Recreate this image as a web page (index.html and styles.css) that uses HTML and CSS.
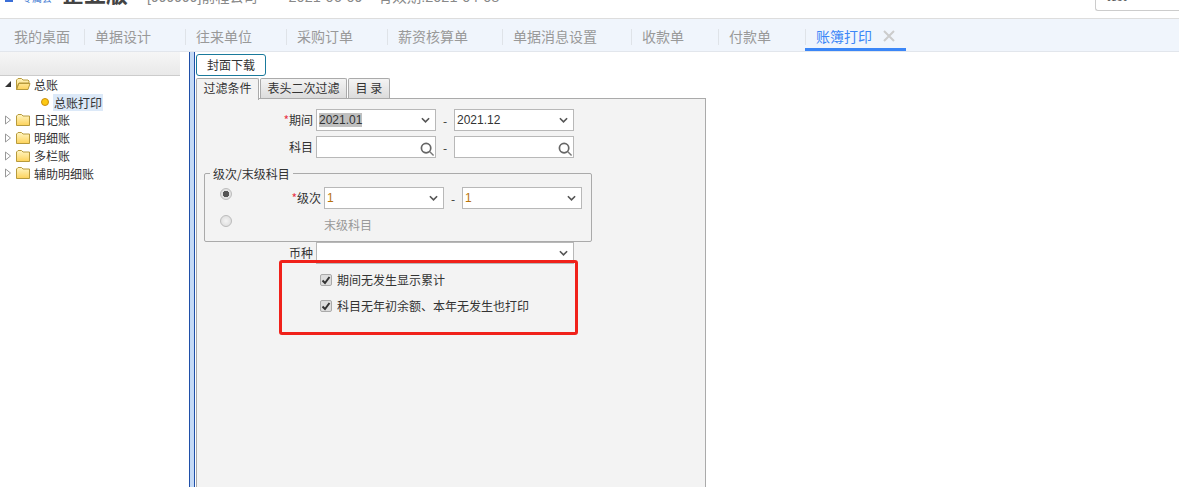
FILE: index.html
```html
<!DOCTYPE html>
<html>
<head>
    <meta charset="utf-8">
    <title>账簿打印</title>
    <link rel="stylesheet" href="styles.css">
</head>

<body>
    <div class="header">
        <div class="header-row">
            <span class="brand-mark"></span>
            <span class="brand-small">专属会</span>
            <span class="brand-big">企业版</span>
            <span class="company">[999999]前程公司</span>
            <span class="date">2021-06-09</span>
            <span class="expiry">有效期:2021-04-08</span>
        </div>
        <div class="user-box"><span class="user-name">test</span></div>
    </div>

    <div class="tabbar">
        <div class="tab first">我的桌面</div>
        <div class="tab">单据设计</div>
        <div class="tab">往来单位</div>
        <div class="tab">采购订单</div>
        <div class="tab">薪资核算单</div>
        <div class="tab">单据消息设置</div>
        <div class="tab">收款单</div>
        <div class="tab">付款单</div>
        <div class="tab active">账簿打印<svg class="close" viewBox="0 0 12 12"><path d="M1 1L11 11M11 1L1 11" stroke="#ccc" stroke-width="2"/></svg></div>
    </div>

    <div class="main">
        <div class="side">
            <div class="side-head"></div>
            <div class="tree">
                <div class="node">
                    <svg class="arrow" viewBox="0 0 8 8"><path d="M7 1V7H1Z" fill="#333"/></svg>
                    <svg class="folder" viewBox="0 0 16 14"><defs><linearGradient id="folder-fill" x1="0" y1="0" x2="0" y2="1"><stop offset="0" stop-color="#fff6c4"/><stop offset="1" stop-color="#fdd25a"/></linearGradient></defs><path d="M1.500 12.500V3L3 1.500H6.500L8 3H13L14 4V6H4L1.500 12.500L3.500 6.500H15L13 12.500Z" fill="url(#folder-fill)" stroke="#b79a3c"/></svg>
                    <span>总账</span>
                </div>
                <div class="node leaf">
                    <span class="dot"></span>
                    <span class="selected">总账打印</span>
                </div>
                <div class="node">
                    <svg class="arrow" viewBox="0 0 8 10"><path d="M1.500 1L6.500 5L1.500 9Z" fill="#fff" stroke="#999"/></svg>
                    <svg class="folder" viewBox="0 0 16 14"><path d="M1.500 12.500V3L3 1.500H6.500L8 3H14.500V12.500Z" fill="url(#folder-fill)" stroke="#b79a3c"/></svg>
                    <span>日记账</span>
                </div>
                <div class="node">
                    <svg class="arrow" viewBox="0 0 8 10"><path d="M1.500 1L6.500 5L1.500 9Z" fill="#fff" stroke="#999"/></svg>
                    <svg class="folder" viewBox="0 0 16 14"><path d="M1.500 12.500V3L3 1.500H6.500L8 3H14.500V12.500Z" fill="url(#folder-fill)" stroke="#b79a3c"/></svg>
                    <span>明细账</span>
                </div>
                <div class="node">
                    <svg class="arrow" viewBox="0 0 8 10"><path d="M1.500 1L6.500 5L1.500 9Z" fill="#fff" stroke="#999"/></svg>
                    <svg class="folder" viewBox="0 0 16 14"><path d="M1.500 12.500V3L3 1.500H6.500L8 3H14.500V12.500Z" fill="url(#folder-fill)" stroke="#b79a3c"/></svg>
                    <span>多栏账</span>
                </div>
                <div class="node">
                    <svg class="arrow" viewBox="0 0 8 10"><path d="M1.500 1L6.500 5L1.500 9Z" fill="#fff" stroke="#999"/></svg>
                    <svg class="folder" viewBox="0 0 16 14"><path d="M1.500 12.500V3L3 1.500H6.500L8 3H14.500V12.500Z" fill="url(#folder-fill)" stroke="#b79a3c"/></svg>
                    <span>辅助明细账</span>
                </div>
            </div>
        </div>

        <div class="splitter"></div>

        <div class="content">
            <div class="button">封面下载</div>
            <div class="form-tabs">
                <div class="form-tab current">过滤条件</div>
                <div class="form-tab">表头二次过滤</div>
                <div class="form-tab">目 录</div>
            </div>

            <div class="panel">
                <div class="row">
                    <div class="label"><em>*</em>期间</div>
                    <div class="field"><span class="highlight">2021.01</span><svg class="chevron" viewBox="0 0 10 6"><path d="M1 1L5 5L9 1" fill="none" stroke="#555" stroke-width="1.800"/></svg></div>
                    <div class="dash">-</div>
                    <div class="field"><span>2021.12</span><svg class="chevron" viewBox="0 0 10 6"><path d="M1 1L5 5L9 1" fill="none" stroke="#555" stroke-width="1.800"/></svg></div>
                </div>
                <div class="row">
                    <div class="label">科目</div>
                    <div class="field"><svg class="search" viewBox="0 0 16 16"><circle cx="6.500" cy="6.500" r="5" fill="none" stroke="#666" stroke-width="1.800"/><path d="M10.500 10.500L14.500 14.500" stroke="#777" stroke-width="1.500"/></svg></div>
                    <div class="dash">-</div>
                    <div class="field"><svg class="search" viewBox="0 0 16 16"><circle cx="6.500" cy="6.500" r="5" fill="none" stroke="#666" stroke-width="1.800"/><path d="M10.500 10.500L14.500 14.500" stroke="#777" stroke-width="1.500"/></svg></div>
                </div>

                <div class="group">
                    <div class="group-title">级次/末级科目</div>
                    <div class="group-body">
                        <div class="radios">
                            <span class="radio on"></span>
                            <span class="radio"></span>
                        </div>
                        <div class="group-rows">
                            <div class="row">
                                <div class="label short"><em>*</em>级次</div>
                                <div class="field"><span class="level">1</span><svg class="chevron" viewBox="0 0 10 6"><path d="M1 1L5 5L9 1" fill="none" stroke="#555" stroke-width="1.800"/></svg></div>
                                <div class="dash">-</div>
                                <div class="field"><span class="level">1</span><svg class="chevron" viewBox="0 0 10 6"><path d="M1 1L5 5L9 1" fill="none" stroke="#555" stroke-width="1.800"/></svg></div>
                            </div>
                            <div class="last-level">末级科目</div>
                        </div>
                    </div>
                </div>

                <div class="row">
                    <div class="label">币种</div>
                    <div class="field wide"><svg class="chevron" viewBox="0 0 10 6"><path d="M1 1L5 5L9 1" fill="none" stroke="#555" stroke-width="1.800"/></svg></div>
                </div>

                <div class="red-box">
                    <div class="check-row">
                        <span class="check"><svg viewBox="0 0 10 10"><path d="M1.500 5.500L4 8L8.500 2" fill="none" stroke="#333" stroke-width="2"/></svg></span>
                        <span class="check-text">期间无发生显示累计</span>
                    </div>
                    <div class="check-row">
                        <span class="check"><svg viewBox="0 0 10 10"><path d="M1.500 5.500L4 8L8.500 2" fill="none" stroke="#333" stroke-width="2"/></svg></span>
                        <span class="check-text">科目无年初余额、本年无发生也打印</span>
                    </div>
                </div>
            </div>
        </div>
    </div>
</body>
</html>
```

FILE: styles.css
```css
html, body {
    height: 487px;
    overflow: hidden;
}

body {
    margin: 0;
    padding: 0;
    display: flex;
    flex-direction: column;
    font-family: "Noto Sans CJK SC", "Liberation Sans", sans-serif;
    font-size: 12px;
    color: #333;
    background-color: #fff;
}

.header {
    display: flex;
    justify-content: space-between;
    height: 18px;
    flex-shrink: 0;
    overflow: hidden;
    border-bottom: 1px solid #ddd;
}

.header-row {
    display: flex;
    align-items: baseline;
    height: 20px;
    line-height: 20px;
    margin-top: -18px;
    padding-left: 5px;
    color: #888;
    font-size: 14px;
}

.brand-mark {
    width: 8px;
    height: 12px;
    background-color: #3b6fd8;
}

.brand-small {
    margin-left: 9px;
    font-size: 10px;
    color: #4a7fd4;
}

.brand-big {
    margin-left: 10px;
    font-size: 22px;
    font-weight: bold;
    color: #444;
}

.company {
    margin-left: 19px;
    font-family: "Liberation Sans", "Noto Sans CJK SC", sans-serif;
}

.date {
    margin-left: 31px;
    font-size: 14.500px;
    font-family: "Liberation Sans", sans-serif;
}

.expiry {
    margin-left: 15px;
    font-size: 14.500px;
    font-family: "Liberation Sans", "Noto Sans CJK SC", sans-serif;
}

.user-box {
    box-sizing: border-box;
    width: 84px;
    height: 11px;
    padding-left: 10px;
    border: 1px solid #ccc;
    border-top: 0;
    border-right: 0;
    border-bottom-left-radius: 3px;
    color: #555;
}

.user-name {
    display: block;
    line-height: 12px;
    margin-top: -10px;
}

.tabbar {
    display: flex;
    align-items: stretch;
    height: 32px;
    flex-shrink: 0;
    background-color: #f0f5fc;
    border-bottom: 1px solid #e2e6ec;
    font-size: 14px;
    color: #999;
}

.tab {
    display: flex;
    align-items: center;
    position: relative;
    padding: 2px 34px 0 11px;
}

.tab::before {
    content: "";
    position: absolute;
    left: 0;
    top: 10px;
    height: 16px;
    width: 1px;
    background-color: #dfe3e8;
}

.tab.first {
    padding: 2px 14px 0;
}

.tab.first::before {
    display: none;
}

.tab.active {
    color: #3b86f7;
    box-shadow: inset 0 -3px 0 #3b86f7;
    padding-right: 0;
    width: 90px;
}

.close {
    width: 12px;
    height: 12px;
    margin-left: 11px;
}

.main {
    display: flex;
    flex: 1;
    min-height: 0;
}

.side {
    width: 180px;
    margin-right: 9px;
    flex-shrink: 0;
}

.side-head {
    height: 23px;
    background: linear-gradient(#f6f6f6, #e9e9e9);
    border-bottom: 1px solid #ccc;
}

.tree {
    margin-top: -0.500px;
}

.node {
    display: flex;
    align-items: center;
    height: 17.800px;
    padding-left: 4px;
    color: #333;
}

.arrow {
    width: 8px;
    height: 10px;
    margin-right: 3px;
}

.folder {
    width: 16px;
    height: 14px;
    margin-right: 3px;
}

.leaf {
    padding-left: 41px;
}

.dot {
    width: 8px;
    height: 8px;
    margin-right: 4px;
    border-radius: 50%;
    background-color: #fdc913;
    border: 1px solid #c98e10;
    box-sizing: border-box;
}

.selected {
    padding: 0 1px;
    background-color: #dce9f8;
}

.splitter {
    width: 4px;
    flex-shrink: 0;
    background-color: #c4d9f5;
    border-left: 1px solid #1f4fa8;
    border-right: 1px solid #1f4fa8;
}

.content {
    display: flex;
    flex-direction: column;
    margin-left: 1px;
    padding-top: 2px;
    width: 510px;
}

.button {
    width: 68px;
    height: 20px;
    line-height: 20px;
    text-align: center;
    border: 1px solid #1a7a9c;
    border-radius: 3px;
}

.form-tabs {
    display: flex;
    gap: 1px;
    margin-top: 2px;
    height: 20px;
    flex-shrink: 0;
}

.form-tab {
    padding: 0 6.500px;
    height: 19px;
    line-height: 17px;
    border: 1px solid #aaa;
    border-bottom: 0;
    border-radius: 2px 2px 0 0;
    background: linear-gradient(#f4f4f4, #dcdcdc);
}

.form-tab.current {
    height: 21px;
    position: relative;
    background: #f3f3f3;
    z-index: 1;
}

.panel {
    position: relative;
    flex: 1;
    box-sizing: border-box;
    padding-top: 10px;
    background-color: #f3f3f3;
    border: 1px solid #aaa;
    border-bottom: 0;
}

.row {
    display: flex;
    align-items: center;
    height: 22px;
    margin-bottom: 5px;
}

.label {
    width: 116px;
    margin-right: 3px;
    margin-bottom: 2px;
    text-align: right;
    flex-shrink: 0;
}

.label em {
    color: #e8334a;
    font-style: normal;
}

.label.short {
    width: 89px;
}

.field {
    display: flex;
    align-items: center;
    justify-content: space-between;
    box-sizing: border-box;
    width: 120px;
    height: 22px;
    padding: 0 2px;
    background-color: #fff;
    border: 1px solid #b8b8b8;
    font-family: "Liberation Sans", sans-serif;
    flex-shrink: 0;
}

.field.wide {
    width: 258px;
}

.highlight {
    background-color: #c0c0c0;
}

.level {
    color: #b8730a;
}

.chevron {
    width: 9px;
    height: 6px;
    margin-left: auto;
    margin-right: 3px;
}

.search {
    width: 15px;
    height: 15px;
    margin-left: auto;
    margin-right: -2px;
    margin-top: 4px;
}

.dash {
    width: 18px;
    text-align: center;
    flex-shrink: 0;
}

.group {
    box-sizing: border-box;
    width: 388px;
    height: 69px;
    margin: 15px 0 0 7px;
    border: 1px solid #aaa;
    border-radius: 2px;
}

.group-title {
    display: table;
    margin: -9px 0 0 5px;
    padding: 0 3px;
    height: 17px;
    line-height: 17px;
    background-color: #f3f3f3;
}

.group-body {
    display: flex;
    margin-top: 5px;
    padding-left: 15px;
}

.radios {
    display: flex;
    flex-direction: column;
    gap: 15px;
    padding-top: 1px;
    width: 12px;
}

.radio {
    box-sizing: border-box;
    width: 12px;
    height: 12px;
    border-radius: 50%;
    border: 1px solid #bbb;
    background: radial-gradient(#f4f4f4, #d8d8d8);
}

.radio.on {
    background: radial-gradient(circle, #555 0 3px, #e2e2e2 3.500px);
}

.group-rows .row {
    margin-bottom: 7px;
}

.last-level {
    height: 18px;
    line-height: 18px;
    margin-left: 92px;
    color: #999;
}

.red-box {
    position: absolute;
    left: 82px;
    top: 161px;
    box-sizing: border-box;
    width: 299px;
    height: 75px;
    padding: 8px 0 0 38px;
    border: 3px solid #f0211a;
    border-radius: 3px;
}

.check-row {
    display: flex;
    align-items: center;
    height: 18px;
    margin-bottom: 8px;
}

.check-text {
    margin-bottom: 2px;
}

.check {
    display: flex;
    box-sizing: border-box;
    width: 12px;
    height: 12px;
    margin-right: 5px;
    background-color: #ddd;
    border: 1px solid #aaa;
    border-radius: 2px;
}
```
